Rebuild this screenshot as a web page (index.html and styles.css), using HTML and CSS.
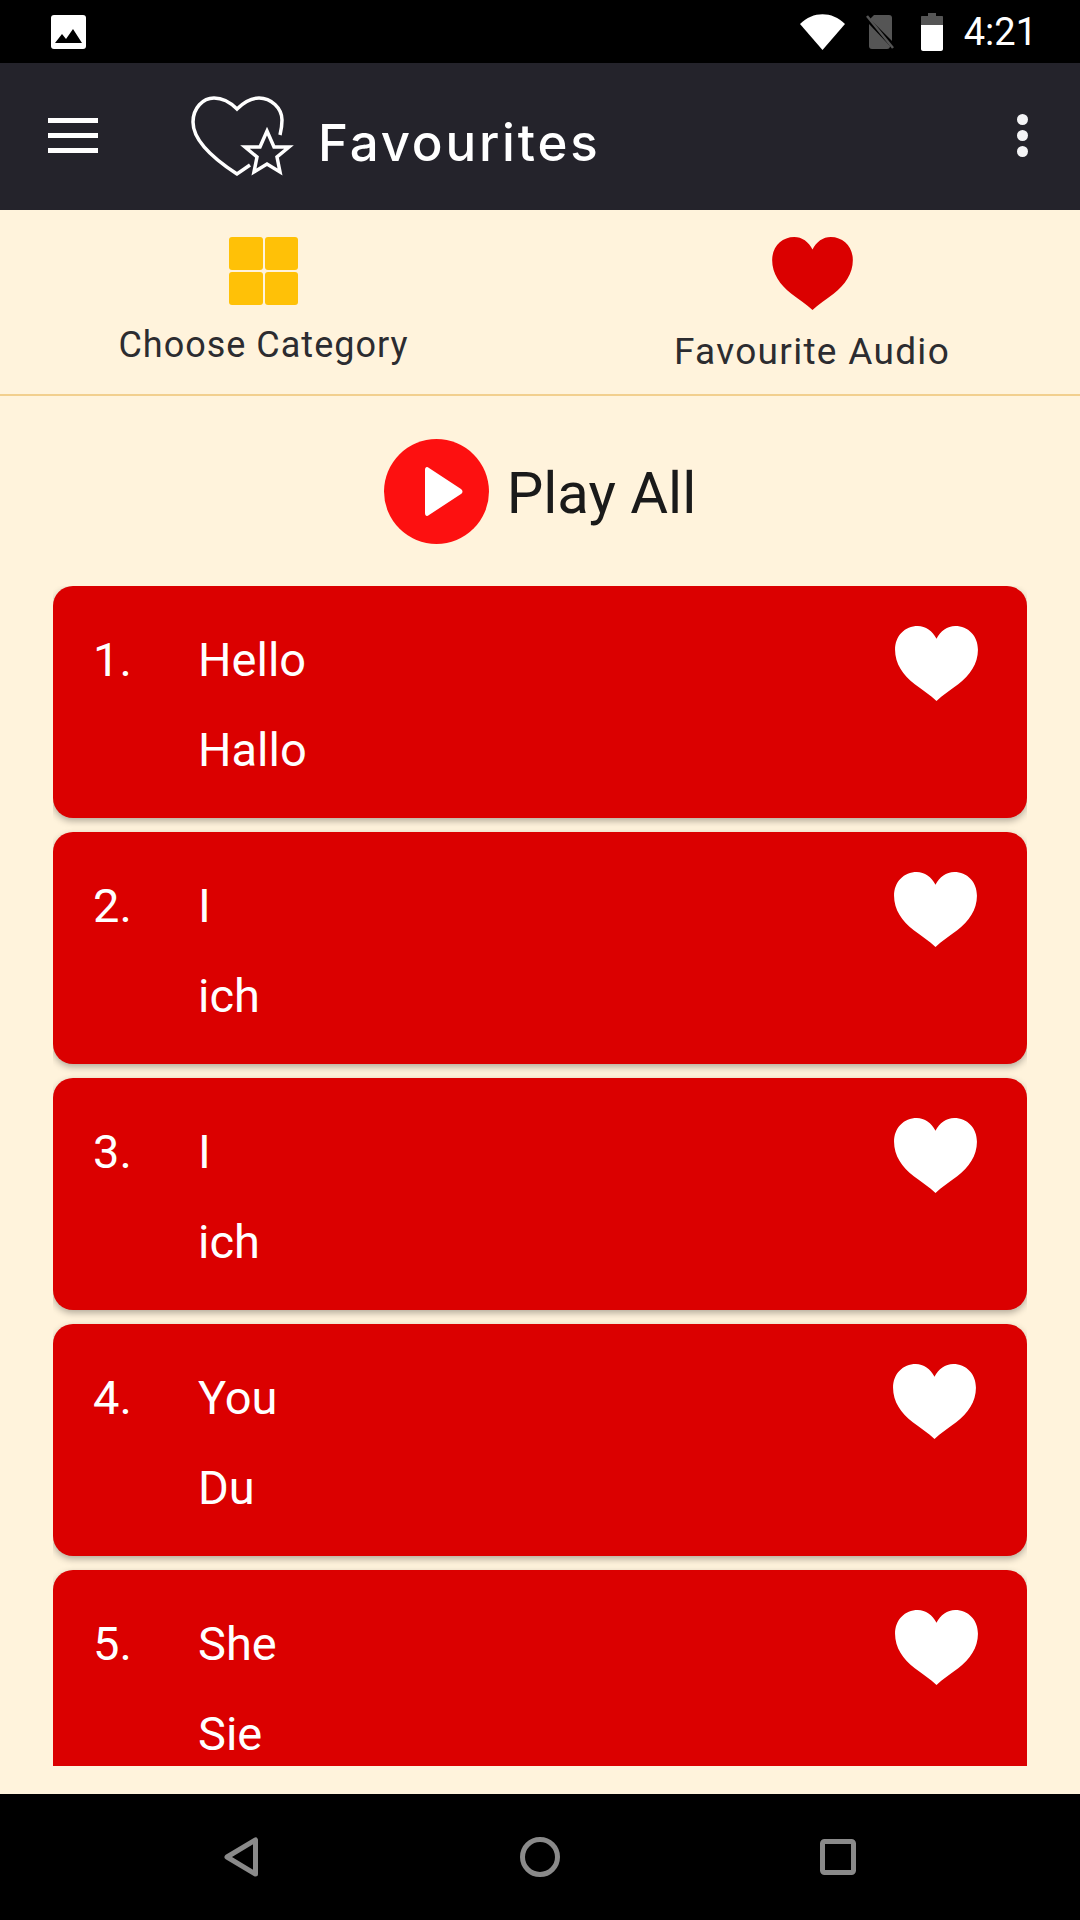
FILE: index.html
```html
<!DOCTYPE html>
<html lang="en">
<head>
  <meta charset="UTF-8" />
  <meta name="viewport" content="width=device-width, initial-scale=1.0"/>
  <title>Favourites</title>
  <link rel="stylesheet" href="styles.css">
</head>
<body>
  <svg class="defs" width="0" height="0">
    <symbol id="heart" viewBox="0 0 84 76">
      <path d="M42 76C36 70 28 65 20 59C8 50 0 38 0 24C0 10 10 0 23 0C31 0 38 5 42 13C46 5 53 0 61 0C74 0 84 10 84 24C84 38 76 50 64 59C56 65 48 70 42 76Z"/>
    </symbol>
  </svg>

  <div class="status-bar">
    <svg class="status-photo" viewBox="0 0 35 34">
      <rect width="35" height="34" rx="3" fill="#fff"/>
      <path d="M4 28L11 19L15 24L22 14L31 28Z" fill="#000"/>
    </svg>
    <div class="status-right">
      <svg class="status-wifi" viewBox="0 0 45 36">
        <path d="M0 10C13 -3 32 -3 45 10L22.500 36Z" fill="#fff"/>
      </svg>
      <svg class="status-sim" viewBox="0 0 28 36">
        <path d="M8 1H23C25 1 26 2 26 4V27L4 5Z" fill="#555"/>
        <path d="M3 10L24 32C24 34 23 35 21 35H6C4 35 3 34 3 32Z" fill="#555"/>
        <path d="M1 2L27 34" stroke="#555" stroke-width="2.500"/>
      </svg>
      <svg class="status-battery" viewBox="0 0 22 38">
        <path d="M7 0H15V3H21C21.600 3 22 3.400 22 4V12H0V4C0 3.400 .4 3 1 3H7Z" fill="#555"/>
        <path d="M0 12H22V36C22 37 21 38 20 38H2C1 38 0 37 0 36Z" fill="#fff"/>
      </svg>
      <span class="status-time">4:21</span>
    </div>
  </div>

  <header class="toolbar">
    <div class="burger"><span></span><span></span><span></span></div>
    <svg class="logo" viewBox="0 0 106 84">
      <path d="M60 70L47 79C30 68 3 48 3 27C3 13 13 3 24 3C33 3 41 8 47 14C53 8 60 3 69 3C81 3 92 13 92 25C92 31 91 36 90 40" fill="none" stroke="#fff" stroke-width="3.500"/>
      <path d="M77 36L84 52L99 52L87 62L90 77L77 69L64 77L67 62L55 52L70 52Z" fill="none" stroke="#fff" stroke-width="3.500"/>
    </svg>
    <span class="toolbar-title">Favourites</span>
    <div class="more"><span></span><span></span><span></span></div>
  </header>

  <main class="content">
    <nav class="tabs">
      <div class="tab tab-category">
        <div class="grid-icon"><span></span><span></span><span></span><span></span></div>
        <span class="tab-label">Choose Category</span>
      </div>
      <div class="tab tab-favourite">
        <svg class="tab-heart"><use href="#heart"/></svg>
        <span class="tab-label">Favourite Audio</span>
      </div>
    </nav>

    <div class="play-all">
      <svg class="play-icon" viewBox="0 0 105 105">
        <circle cx="52.500" cy="52.500" r="52.500" fill="#fd1010"/>
        <path d="M41 31C41 28 43 27 45 29L77 50C79 51.500 79 53.500 77 55L45 76C43 78 41 77 41 74Z" fill="#fff"/>
      </svg>
      <span class="play-label">Play All</span>
    </div>

    <div class="list">
      <div class="card">
        <span class="card-num">1.</span>
        <div class="card-text"><span>Hello</span><span>Hallo</span></div>
        <svg class="card-heart"><use href="#heart"/></svg>
      </div>
      <div class="card">
        <span class="card-num">2.</span>
        <div class="card-text"><span>I</span><span>ich</span></div>
        <svg class="card-heart"><use href="#heart"/></svg>
      </div>
      <div class="card">
        <span class="card-num">3.</span>
        <div class="card-text"><span>I</span><span>ich</span></div>
        <svg class="card-heart"><use href="#heart"/></svg>
      </div>
      <div class="card">
        <span class="card-num">4.</span>
        <div class="card-text"><span>You</span><span>Du</span></div>
        <svg class="card-heart"><use href="#heart"/></svg>
      </div>
      <div class="card">
        <span class="card-num">5.</span>
        <div class="card-text"><span>She</span><span>Sie</span></div>
        <svg class="card-heart"><use href="#heart"/></svg>
      </div>
    </div>
  </main>

  <footer class="nav-bar">
    <svg class="nav-back" viewBox="0 0 34 40">
      <path d="M31.500 3V37L3 20Z" fill="none" stroke="#8a8a8a" stroke-width="5" stroke-linejoin="round"/>
    </svg>
    <svg class="nav-home" viewBox="0 0 40 40">
      <circle cx="20" cy="20" r="17.500" fill="none" stroke="#8a8a8a" stroke-width="5"/>
    </svg>
    <svg class="nav-recent" viewBox="0 0 36 36">
      <rect x="2.500" y="2.500" width="31" height="31" rx="2" fill="none" stroke="#8a8a8a" stroke-width="5"/>
    </svg>
  </footer>
</body>
</html>
```

FILE: styles.css
```css
* {
  box-sizing: border-box;
}

body {
  margin: 0;
  width: 1080px;
  height: 1920px;
  display: flex;
  flex-direction: column;
  overflow: hidden;
  font-family: Roboto, sans-serif;
  background-color: #fff3dc;
}

.defs {
  position: absolute;
}

.status-bar {
  height: 63px;
  flex: none;
  display: flex;
  align-items: center;
  justify-content: space-between;
  padding: 0 43px 0 51px;
  background-color: #000;
}

.status-photo {
  width: 35px;
  height: 34px;
}

.status-right {
  display: flex;
  align-items: center;
}

.status-wifi {
  width: 45px;
  height: 36px;
  margin-right: 21px;
}

.status-sim {
  width: 28px;
  height: 36px;
  margin-right: 27px;
}

.status-battery {
  width: 22px;
  height: 38px;
  margin-right: 21px;
}

.status-time {
  font-size: 38px;
  color: #fff;
}

.toolbar {
  height: 147px;
  flex: none;
  display: flex;
  align-items: center;
  padding: 0 52px 0 48px;
  background-color: #24232b;
}

.burger {
  width: 50px;
  display: flex;
  flex-direction: column;
  gap: 10px;
  margin: -2px 92px 0 0;
}

.burger span {
  height: 5px;
  background-color: #fff;
}

.logo {
  width: 106px;
  height: 84px;
  margin-right: 22px;
}

.toolbar-title {
  font-family: Inter, sans-serif;
  font-size: 51px;
  font-weight: 500;
  letter-spacing: 2.800px;
  color: #fff;
  margin-top: 12px;
}

.more {
  margin: -3px 0 0 auto;
  display: flex;
  flex-direction: column;
  gap: 5px;
}

.more span {
  width: 11px;
  height: 11px;
  border-radius: 50%;
  background-color: #f4f4f6;
}

.content {
  flex: 1;
  min-height: 0;
  display: flex;
  flex-direction: column;
}

.tabs {
  height: 186px;
  flex: none;
  display: flex;
  border-bottom: 2px solid #f2cf8e;
}

.tab {
  width: 50%;
  display: flex;
  flex-direction: column;
  align-items: center;
  padding-top: 27px;
}

.tab-category {
  padding-right: 13px;
}

.tab-favourite {
  padding-left: 4px;
}

.grid-icon {
  width: 69px;
  height: 68px;
  display: grid;
  grid-template-columns: 1fr 1fr;
  grid-template-rows: 1fr 1fr;
  gap: 2px;
}

.grid-icon span {
  background-color: #ffc107;
  border-radius: 3px;
}

.tab-heart {
  width: 81px;
  height: 73px;
  fill: #db0000;
}

.tab-label {
  letter-spacing: 1px;
  color: #2c2c30;
  line-height: 41px;
}

.tab-category .tab-label {
  font-size: 36px;
  margin-top: 20px;
}

.tab-favourite .tab-label {
  font-size: 37px;
  letter-spacing: 1.300px;
  margin-top: 21px;
}

.play-all {
  height: 190px;
  flex: none;
  display: flex;
  align-items: center;
  justify-content: center;
  gap: 18px;
}

.play-icon {
  width: 105px;
  height: 105px;
}

.play-label {
  font-size: 58px;
  color: #1a1a1a;
  margin-top: 4px;
}

.list {
  height: 1180px;
  flex: none;
  overflow: hidden;
  margin: 0 53px;
  display: flex;
  flex-direction: column;
  gap: 14px;
}

.card {
  height: 232px;
  flex: none;
  display: flex;
  align-items: flex-start;
  padding: 29px 49px 0 40px;
  border-radius: 20px;
  background-color: #db0000;
  box-shadow: 0 3px 7px rgba(0, 0, 0, 0.3);
  color: #fff;
  font-size: 47px;
  line-height: 90px;
}

.card-num {
  width: 105px;
}

.card-text {
  display: flex;
  flex-direction: column;
}

.card-heart {
  width: 83px;
  height: 75px;
  margin: 11px 0 0 auto;
  fill: #fff;
}

.card:nth-child(2) .card-heart,
.card:nth-child(3) .card-heart {
  margin-right: 1px;
}

.card:nth-child(4) .card-heart {
  margin-right: 2px;
}

.nav-bar {
  height: 126px;
  flex: none;
  display: flex;
  align-items: center;
  background-color: #000;
  padding: 0 224px;
}

.nav-back {
  width: 34px;
  height: 40px;
}

.nav-home {
  width: 40px;
  height: 40px;
  margin-left: 262px;
}

.nav-recent {
  width: 36px;
  height: 36px;
  margin-left: 260px;
}
```
